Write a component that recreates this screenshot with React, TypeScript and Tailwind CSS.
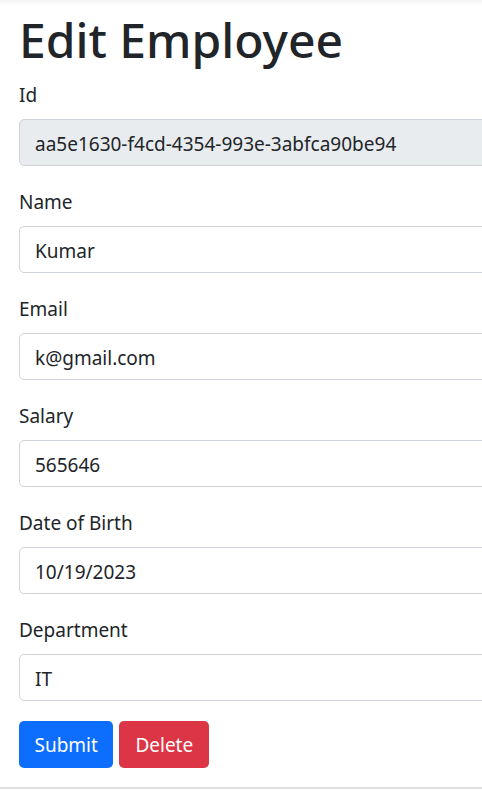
import { useState } from "react"

const fields = [
  { label: "Id", value: "aa5e1630-f4cd-4354-993e-3abfca90be94", disabled: true },
  { label: "Name", value: "Kumar" },
  { label: "Email", value: "k@gmail.com" },
  { label: "Salary", value: "565646" },
  { label: "Date of Birth", value: "10/19/2023" },
  { label: "Department", value: "IT" },
]

export default function App() {
  const [form, setForm] = useState(fields.map((f) => f.value))

  return (
    <div className="h-[790px] w-full overflow-hidden bg-white text-[#212529] font-['Noto_Sans',sans-serif]">
      {/* top shadow from navbar */}
      <div className="h-[6px] bg-gradient-to-b from-[#f3f3f3] to-white" />
      <div className="w-[640px] pl-[19px] pt-[3px]">
        <h1 className="mb-[10px] pt-[1px] text-[48px] font-medium leading-[59px]">Edit Employee</h1>
        <form onSubmit={(e) => e.preventDefault()}>
          {fields.map((f, i) => (
            <div key={f.label} className="mb-[20px]">
              <label className="mb-[10px] block pt-[2px] text-[19px] leading-[28px]">{f.label}</label>
              <input
                value={form[i]}
                disabled={f.disabled}
                onChange={(e) => setForm(form.map((v, j) => (j === i ? e.target.value : v)))}
                className={
                  "block h-[47px] w-full rounded-[5px] border border-[#ced4da] px-[15px] pt-[2px] text-[19px] text-[#212529] outline-none " +
                  (f.disabled ? "bg-[#e9ecef]" : "bg-white")
                }
              />
            </div>
          ))}
          <div className="flex gap-[6px]">
            <button className="h-[47px] rounded-[5px] bg-[#0d6efd] px-[15.5px] pt-[2px] text-[19px] text-white">Submit</button>
            <button className="h-[47px] rounded-[5px] bg-[#dc3545] px-[16px] pt-[2px] text-[19px] text-white">Delete</button>
          </div>
        </form>
      </div>
      <div className="mt-[19px] h-[2px] bg-[#e0e0e0]" />
    </div>
  )
}
